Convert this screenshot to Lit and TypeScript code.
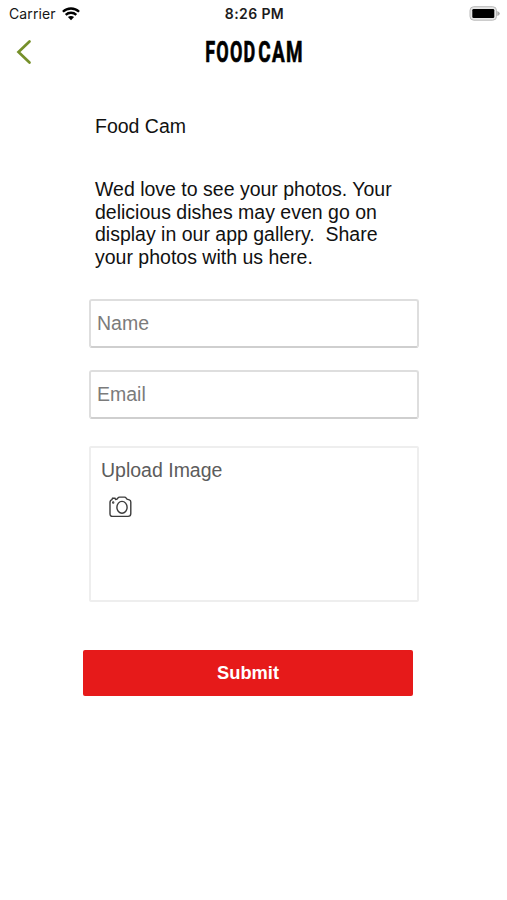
import { LitElement, html, css } from "lit";
import { customElement } from "lit/decorators.js";

@customElement("status-bar")
class StatusBar extends LitElement {
  static styles = css`
    :host {
      display: grid;
      grid-template-columns: 1fr auto 1fr;
      align-items: center;
      height: 28px;
      padding: 0 7px 0 9px;
      box-sizing: border-box;
      font-family: Inter, "Liberation Sans", sans-serif;
      color: #161616;
    }
    .carrier {
      display: flex;
      align-items: center;
      gap: 6px;
      font-size: 14px;
      letter-spacing: 0.1px;
    }
    .time {
      font-size: 14px;
      font-weight: 600;
      letter-spacing: 0.4px;
      color: #1c1c1c;
    }
    .battery {
      justify-self: end;
    }
    svg {
      display: block;
    }
  `;

  render() {
    return html`
      <div class="carrier">
        <span>Carrier</span>
        <svg width="18" height="14" viewBox="0 0 18 14">
          <g fill="none" stroke="#000" stroke-width="2.3">
            <path d="M0.9 4.800C5.4.4 12.600.4 17.1 4.800" />
            <path d="M3.700 7.900C6.700 5 11.300 5 14.300 7.900" />
          </g>
          <path d="M9 13.200L5.900 10.100C7.700 8.500 10.300 8.500 12.100 10.100Z" fill="#000" />
        </svg>
      </div>
      <div class="time">8:26 PM</div>
      <svg class="battery" width="31" height="16" viewBox="0 0 31 16">
        <rect x="1" y="0.700" width="26.500" height="13.500" rx="3.800" fill="#e6e6e6" stroke="#b9b9b9" />
        <rect x="3.300" y="3" width="22" height="9" rx="1.300" fill="#000" />
        <path d="M28.300 5Q30.800 6 30.800 7.500T28.300 10Z" fill="#aaa" />
      </svg>
    `;
  }
}

@customElement("nav-bar")
class NavBar extends LitElement {
  static styles = css`
    :host {
      display: grid;
      grid-template-columns: 1fr auto 1fr;
      align-items: center;
      height: 48px;
      padding: 0 16px;
    }
    svg {
      display: block;
    }
    .title {
      font-family: Roboto, "Liberation Sans", sans-serif;
      font-weight: 700;
      font-size: 30px;
      letter-spacing: 2px;
      stroke: #000;
      stroke-width: 0.700px;
    }
  `;

  render() {
    return html`
      <svg width="16" height="26" viewBox="0 0 16 26">
        <path d="M13.500 2.500L2.500 13L13.500 23.500" fill="none" stroke="#76902a" stroke-width="2.700" stroke-linecap="round" />
      </svg>
      <svg class="title" width="100" height="44" viewBox="0 0 100 44">
        <text transform="translate(1.300 32.300) scale(0.600 1)">FOOD</text>
        <text transform="translate(54.300 32.300) scale(0.630 1)">CAM</text>
      </svg>
      <span></span>
    `;
  }
}

@customElement("app-root")
class AppRoot extends LitElement {
  static styles = css`
    :host {
      display: block;
      min-height: 900px;
      background: #fff;
      font-family: "Liberation Sans", Arial, sans-serif;
      font-size: 19.5px;
      line-height: 22.5px;
      color: #111;
    }
    .form {
      display: flex;
      flex-direction: column;
      width: 331px;
      margin-left: 89px;
      padding-top: 39px;
    }
    .heading,
    .intro {
      margin: 0 0 0 6px;
    }
    .intro {
      margin-top: 40.5px;
      white-space: pre;
    }
    .field {
      box-sizing: border-box;
      height: 49px;
      width: 330px;
      padding: 0 6px;
      border: 2px solid #dedede;
      border-bottom-color: #cfcfcf;
      border-radius: 3px;
      background: #fff;
      font: inherit;
      outline: none;
    }
    .field::placeholder {
      color: #7b7b7b;
      opacity: 1;
    }
    .name {
      margin-top: 30.5px;
    }
    .email {
      margin-top: 22px;
    }
    .upload {
      box-sizing: border-box;
      width: 330px;
      height: 156px;
      margin-top: 27px;
      padding: 11px 10px;
      border: 2px solid #eee;
      border-radius: 2px;
      color: #5c5c5c;
    }
    .camera {
      display: block;
      margin: 14.5px 0 0 7.5px;
    }
    .submit {
      width: 330px;
      height: 46px;
      margin: 48px 0 0 -6px;
      padding: 0;
      border: 0;
      border-radius: 2px;
      background: #e61a1a;
      color: #fff;
      font: bold 18.3px "Liberation Sans", Arial, sans-serif;
    }
  `;

  render() {
    return html`
      <status-bar></status-bar>
      <nav-bar></nav-bar>
      <main class="form">
        <p class="heading">Food Cam</p>
        <p class="intro">${"Wed love to see your photos. Your\ndelicious dishes may even go on\ndisplay in our app gallery.  Share\nyour photos with us here."}</p>
        <input class="field name" placeholder="Name" />
        <input class="field email" type="email" placeholder="Email" />
        <section class="upload">
          <div>Upload Image</div>
          <svg class="camera" width="23" height="22" viewBox="0 0 23 22" fill="none" stroke="#3c3c3c" stroke-width="1.400">
            <path d="M3 3.600L3.500 2.300H6L6.700 3.500Q8.200 3.500 9 1.900Q9.500 1.100 10.500 1.100H15.500Q16.500 1.100 17.200 2.100L18 3.200L20.300 3.800Q21.800 4.300 21.800 6V17.500Q21.800 20.400 19 20.400H3.500Q1 20.400 1 17.700V6.500Q1 4 3 3.600Z" />
            <ellipse cx="13" cy="11.300" rx="5.100" ry="5.900" />
            <circle cx="4.200" cy="6.500" r="0.500" />
          </svg>
        </section>
        <button class="submit">Submit</button>
      </main>
    `;
  }
}
